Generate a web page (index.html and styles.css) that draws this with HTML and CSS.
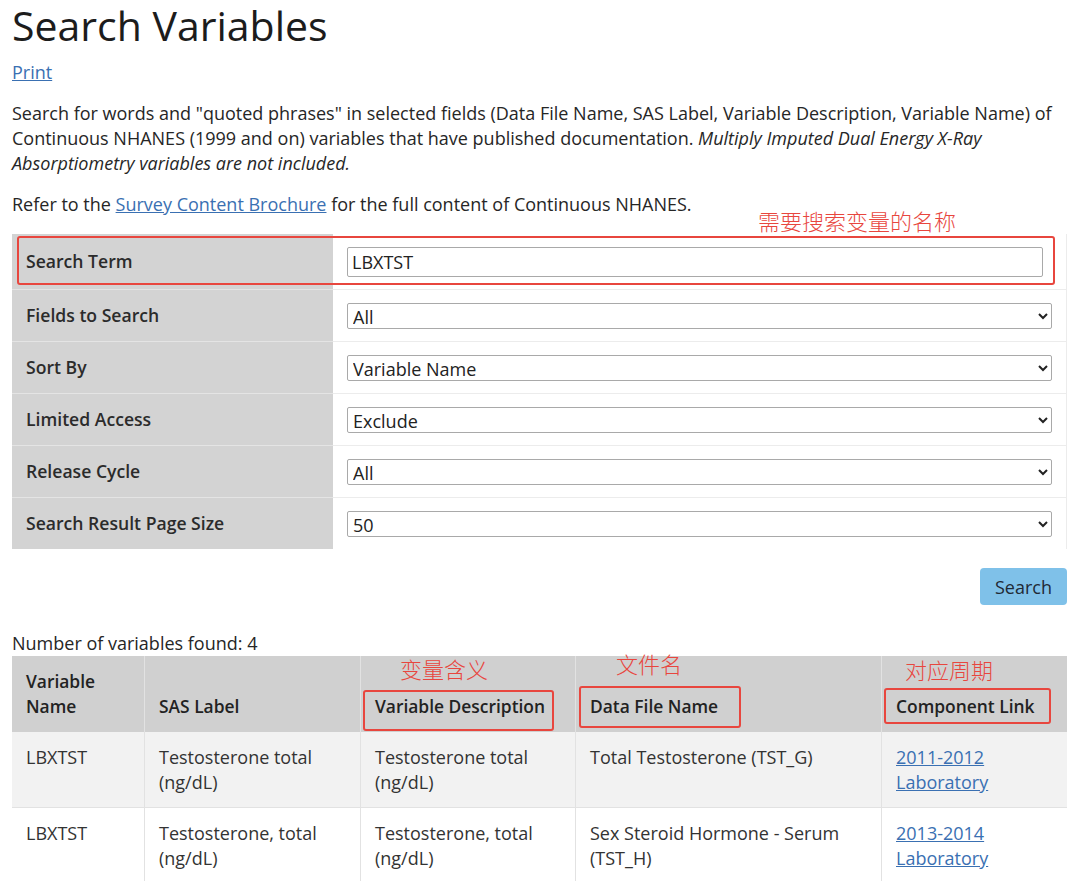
FILE: index.html
```html
<!DOCTYPE html>
<html lang="en">
<head>
    <meta charset="UTF-8">
    <title>Search Variables</title>
    <link rel="stylesheet" href="styles.css">
</head>
<body>
    <h1 class="page-title">Search Variables</h1>
    <p class="print"><a href="#">Print</a></p>
    <p>Search for words and "quoted phrases" in selected fields (Data File Name, SAS Label, Variable Description, Variable Name) of Continuous NHANES (1999 and on) variables that have published documentation. <em>Multiply Imputed Dual Energy X-Ray<br>Absorptiometry variables are not included.</em></p>
    <p>Refer to the <a href="#">Survey Content Brochure</a> for the full content of Continuous NHANES.</p>

    <div class="form-wrap">
        <span class="note note-term">需要搜索变量的名称</span>
        <div class="mark-row"></div>
        <table class="form-table">
            <tr class="first">
                <th>Search Term</th>
                <td><input type="text" class="term" value="LBXTST"></td>
            </tr>
            <tr>
                <th>Fields to Search</th>
                <td><select><option>All</option></select></td>
            </tr>
            <tr>
                <th>Sort By</th>
                <td><select><option>Variable Name</option></select></td>
            </tr>
            <tr>
                <th>Limited Access</th>
                <td><select><option>Exclude</option></select></td>
            </tr>
            <tr>
                <th>Release Cycle</th>
                <td><select><option>All</option></select></td>
            </tr>
            <tr>
                <th>Search Result Page Size</th>
                <td><select><option>50</option></select></td>
            </tr>
        </table>
    </div>

    <div class="actions">
        <button class="search-btn">Search</button>
    </div>

    <div class="found">Number of variables found: 4</div>
    <table class="results">
        <thead>
            <tr>
                <th class="c1">Variable<br>Name</th>
                <th class="c2">SAS Label</th>
                <th class="c3"><span class="mark mark-desc"><span class="note note-desc">变量含义</span>Variable Description</span></th>
                <th class="c4"><span class="mark mark-file"><span class="note note-file">文件名</span>Data File Name</span></th>
                <th class="c5"><span class="mark mark-link"><span class="note note-link">对应周期</span>Component Link</span></th>
            </tr>
        </thead>
        <tbody>
            <tr class="odd">
                <td>LBXTST</td>
                <td>Testosterone total (ng/dL)</td>
                <td>Testosterone total (ng/dL)</td>
                <td>Total Testosterone (TST_G)</td>
                <td><a href="#">2011-2012 Laboratory</a></td>
            </tr>
            <tr>
                <td>LBXTST</td>
                <td>Testosterone, total (ng/dL)</td>
                <td>Testosterone, total (ng/dL)</td>
                <td>Sex Steroid Hormone - Serum (TST_H)</td>
                <td><a href="#">2013-2014 Laboratory</a></td>
            </tr>
        </tbody>
    </table>
</body>
</html>
```

FILE: styles.css
```css
body {
    margin: 0;
    padding: 0 13px 0 12px;
    font-family: "Open Sans", "Noto Sans", sans-serif;
    font-size: 18px;
    line-height: 25px;
    color: #262626;
    background: #fff;
}
a {
    color: #3a70b2;
}
p {
    margin: 16px 0;
}
.page-title {
    margin: 0;
    padding-top: 1px;
    font-size: 41px;
    line-height: 48px;
    font-weight: 400;
    color: #1c1c1c;
}
.print {
    margin-top: 11px;
}

.form-wrap {
    position: relative;
    margin-top: 17px;
}
.note {
    position: absolute;
    font-family: "Noto Sans CJK SC", sans-serif;
    font-size: 22px;
    line-height: 24px;
    font-weight: 300;
    color: #e8463e;
    white-space: nowrap;
}
.note-term {
    left: 746px;
    top: -26px;
}
.mark-row {
    position: absolute;
    left: 5px;
    top: 2px;
    width: 1034px;
    height: 45px;
    border: 2px solid #e8463e;
    border-radius: 3px;
    pointer-events: none;
}
.form-table {
    width: 100%;
    border-collapse: collapse;
}
.form-table th {
    width: 293px;
    height: 51px;
    padding: 0 14px;
    text-align: left;
    font-size: 17.6px;
    font-weight: 600;
    color: #2b2b2b;
    background: #d3d3d3;
    border-top: 1px solid #e4e4e4;
}
.form-table tr.first th,
.form-table tr.first td {
    height: 55px;
    border-top: none;
}
.form-table td {
    padding: 0 14px;
    border-top: 1px solid #ececec;
    border-right: 1px solid #ececec;
}
.form-table input,
.form-table select {
    display: block;
    box-sizing: border-box;
    width: 100%;
    height: 26px;
    padding: 0 1px;
    font-family: "Open Sans", sans-serif;
    font-size: 18px;
    color: #222;
    background: #fff;
    border: 1px solid #a9a9a9;
    border-radius: 2px;
}
.form-table input.term {
    width: 696px;
    height: 30px;
    padding: 0 4px;
}

.actions {
    display: flex;
    justify-content: flex-end;
    margin-top: 19px;
}
.search-btn {
    box-sizing: border-box;
    width: 87px;
    height: 37px;
    font-family: "Open Sans", sans-serif;
    font-size: 18px;
    color: #1f2a36;
    background: #7fc1e9;
    border: none;
    border-radius: 4px;
}

.found {
    margin-top: 26px;
}
.results {
    width: 100%;
    border-collapse: collapse;
    table-layout: fixed;
}
.results th {
    position: relative;
    height: 50px;
    padding: 13px 14px 13px;
    vertical-align: bottom;
    text-align: left;
    font-size: 17.4px;
    font-weight: 600;
    color: #222;
    background: #d0d0d0;
    border-right: 1px solid #e2e2e2;
}
.results th:last-child {
    border-right: none;
}
.results .c1 { width: 104px; }
.results .c2 { width: 187px; }
.results .c3 { width: 186px; }
.results .c4 { width: 277px; }
.results td {
    padding: 13px 14px 12px;
    vertical-align: top;
    color: #333;
    border-right: 1px solid #e2e2e2;
    border-bottom: 1px solid #e2e2e2;
}
.results td:last-child {
    border-right: none;
}
.results tr.odd td {
    background: #f2f2f2;
}
.mark {
    position: relative;
    display: inline-block;
}
.mark::after {
    content: "";
    position: absolute;
    border: 2px solid #e8463e;
    border-radius: 3px;
}
.mark-desc::after { left: -12px; right: -9px; top: -4px; bottom: -12px; }
.mark-file::after { left: -11px; right: -23px; top: -8px; bottom: -9px; }
.mark-link::after { left: -12px; right: -16px; top: -6px; bottom: -5px; }
.note-desc { left: 25px; top: -38px; }
.note-file { left: 26px; top: -43px; }
.note-link { left: 9px; top: -37px; }
```
